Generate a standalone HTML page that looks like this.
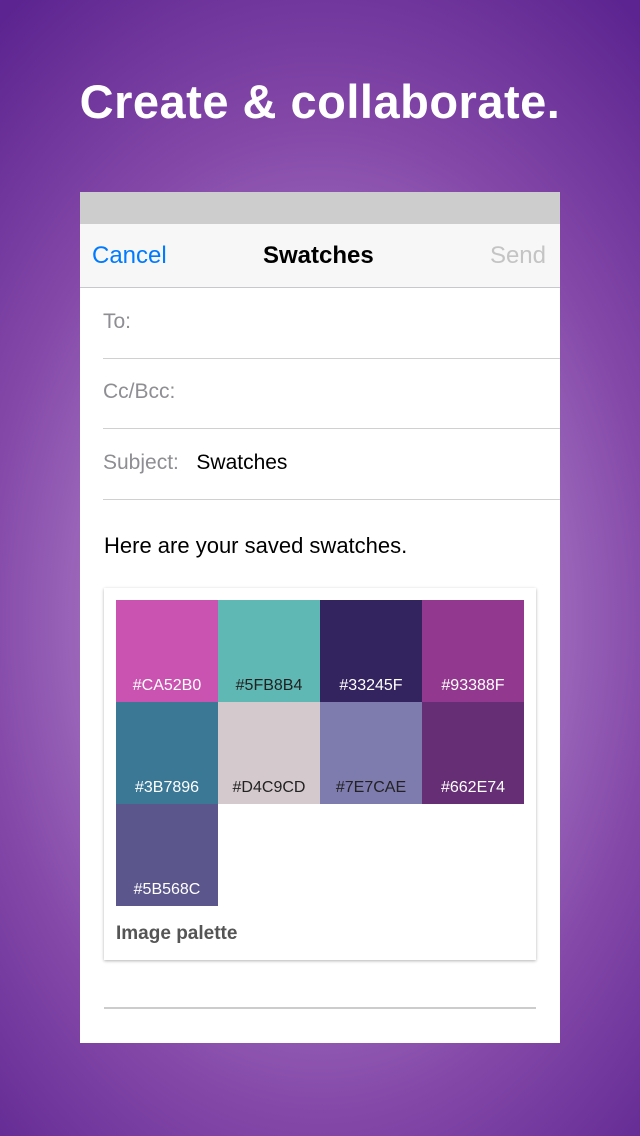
<!DOCTYPE html>
<html><head><meta charset="utf-8"><style>
*{margin:0;padding:0;box-sizing:border-box}
body{width:640px;height:1136px;overflow:hidden;position:relative;font-family:"Liberation Sans",sans-serif;
background:radial-gradient(ellipse 520px 760px at 320px 620px,#c8a4d8 0%,#a878c4 35%,#8448a8 65%,#5c2490 100%);}
h1{position:absolute;top:74px;left:0;width:640px;text-align:center;color:#fff;font-size:47px;font-weight:bold;letter-spacing:0.5px}
.ph{position:absolute;left:80px;top:192px;width:480px;height:851px;background:#fff;overflow:hidden}
.sb{height:32px;background:#cdcdcd}
.nav{height:64px;background:#f7f7f7;border-bottom:1px solid #c8c8cc;position:relative;font-size:24px}
.nav span{position:absolute;top:18px}
.row{position:absolute;left:23px;right:0;height:70px;border-bottom:1px solid #d0d0d0;font-size:21px;color:#8e8e93;padding-top:21px}
.row b{font-weight:normal;color:#000}
.card{position:absolute;left:24px;top:396px;width:432px;height:372px;background:#fff;box-shadow:0 1px 3px rgba(0,0,0,.3)}
.sw{position:absolute;width:102px;height:102px;font-size:16px;text-align:center;padding-top:77px}
</style></head><body>
<h1>Create &amp; collaborate.</h1>
<div class="ph">
<div class="sb"></div>
<div class="nav"><span style="left:12px;color:#007aff">Cancel</span><span style="left:183px;font-weight:bold;color:#000">Swatches</span><span style="right:14px;color:#c4c4c4">Send</span></div>
<div class="row" style="top:97px">To:</div>
<div class="row" style="top:167px">Cc/Bcc:</div>
<div class="row" style="top:238px">Subject:&nbsp;&nbsp; <b>Swatches</b></div>
<div style="position:absolute;left:24px;top:341px;font-size:22px;color:#000">Here are your saved swatches.</div>
<div class="card">
<div class="sw" style="left:12px;top:12px;background:#CA52B0;color:#fff">#CA52B0</div>
<div class="sw" style="left:114px;top:12px;background:#5FB8B4;color:#222">#5FB8B4</div>
<div class="sw" style="left:216px;top:12px;background:#33245F;color:#fff">#33245F</div>
<div class="sw" style="left:318px;top:12px;background:#93388F;color:#fff">#93388F</div>
<div class="sw" style="left:12px;top:114px;background:#3B7896;color:#fff">#3B7896</div>
<div class="sw" style="left:114px;top:114px;background:#D4C9CD;color:#222">#D4C9CD</div>
<div class="sw" style="left:216px;top:114px;background:#7E7CAE;color:#222">#7E7CAE</div>
<div class="sw" style="left:318px;top:114px;background:#662E74;color:#fff">#662E74</div>
<div class="sw" style="left:12px;top:216px;background:#5B568C;color:#fff">#5B568C</div>
<div style="position:absolute;left:12px;top:335px;font-size:19px;font-weight:bold;color:#555">Image palette</div>
</div>
<div style="position:absolute;left:24px;width:432px;top:815px;border-top:2px solid #ccc"></div>
</div>
</body></html>
